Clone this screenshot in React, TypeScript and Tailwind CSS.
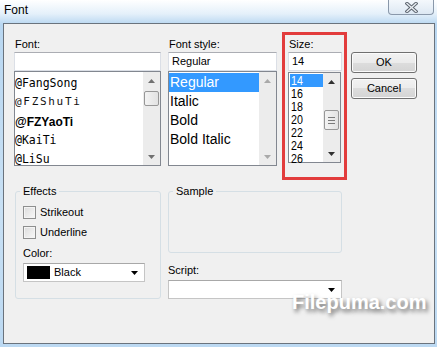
const sans = "font-['Liberation_Sans',Arial,sans-serif]";
const mono = "font-['DejaVu_Sans_Mono','Liberation_Mono',monospace]";

function Arrow({ dir, color }: { dir: "up" | "down"; color: string }) {
  return (
    <svg width="7" height="4" viewBox="0 0 7 4">
      <path d={dir === "up" ? "M0 4L3.5 0L7 4Z" : "M0 0L7 0L3.5 4Z"} fill={color} />
    </svg>
  );
}

function ScrollBar({
  thumbTop,
  thumbH,
  grip,
  arrow,
}: {
  thumbTop?: number;
  thumbH?: number;
  grip?: boolean;
  arrow: string;
}) {
  return (
    <div className="flex h-full w-[17px] flex-col bg-[#ececec]">
      <div className="flex h-[17px] items-center justify-center">
        <Arrow dir="up" color={arrow} />
      </div>
      <div className="flex-1">
        {thumbH ? (
          <div
            className="mx-[1px] flex flex-col items-center justify-center gap-[2px] rounded-[2px] border border-[#979797] bg-[linear-gradient(90deg,#f3f3f3,#e2e2e2)]"
            style={{ marginTop: thumbTop, height: thumbH }}
          >
            {grip && (
              <>
                <div className="h-px w-[7px] bg-[#7a7a7a]" />
                <div className="h-px w-[7px] bg-[#7a7a7a]" />
                <div className="h-px w-[7px] bg-[#7a7a7a]" />
              </>
            )}
          </div>
        ) : null}
      </div>
      <div className="flex h-[17px] items-center justify-center">
        <Arrow dir="down" color={arrow} />
      </div>
    </div>
  );
}

function TextBox({ value, className }: { value: string; className: string }) {
  return (
    <div
      className={`flex h-[19px] items-center border border-[#dbdfe6] border-t-[#abadb3] bg-white pl-[3px] text-[11px] text-black ${className}`}
    >
      {value}
    </div>
  );
}

function Combo({ children }: { children?: React.ReactNode }) {
  return (
    <div className="flex h-[19px] items-center border border-[#c5c5c5] border-t-[#a8a8a8] bg-white text-[11px]">
      <div className="flex flex-1 items-center">{children}</div>
      <div className="mr-[6px] flex items-center">
        <Arrow dir="down" color="#000" />
      </div>
    </div>
  );
}

function CheckBox({ label }: { label: string }) {
  return (
    <div className="flex h-[13px] items-center pl-[7px]">
      <div className="h-[13px] w-[13px] border border-[#8e8f8f] bg-[linear-gradient(135deg,#dcdcdc,#f8f8f8)] shadow-[inset_0_0_0_1px_#f4f4f4]" />
      <span className="ml-[4px] text-[11px] leading-[13px]">{label}</span>
    </div>
  );
}

function Button({ label }: { label: string }) {
  return (
    <div className="flex h-[21px] items-center justify-center rounded-[3px] border border-[#707070] bg-[linear-gradient(#f2f2f2_0%,#ebebeb_50%,#dddddd_50%,#d4d4d4_100%)] text-[11px] shadow-[inset_0_0_0_1px_#fbfbfb]">
      {label}
    </div>
  );
}

export default function App() {
  const fonts = [
    { name: "@FangSong", cls: `${mono} text-[11.5px]` },
    { name: "@FZShuTi", cls: `${mono} text-[11px] tracking-[1.7px] text-[#111]` },
    { name: "@FZYaoTi", cls: `${sans} text-[12px] font-bold` },
    { name: "@KaiTi", cls: `${mono} text-[11.5px]` },
    { name: "@LiSu", cls: `${mono} text-[11.5px]` },
  ];
  const styles = ["Regular", "Italic", "Bold", "Bold Italic"];
  const sizes = ["14", "16", "18", "20", "22", "24", "26"];

  return (
    <div
      className={`relative h-[347px] w-[437px] overflow-hidden bg-[linear-gradient(180deg,#ffffff_0%,#e4f0fa_4%,#b9d7f1_7%,#c8e0f4_60%,#bcd9f2_100%)] text-black ${sans}`}
    >
      {/* title bar */}
      <div className="flex h-[23px] items-start justify-between">
        <div className="pl-[4px] pt-[2px] text-[12px] leading-[16px]">Font</div>
        <div className="mr-[3px] flex h-[15px] w-[46px] items-center justify-center rounded-b-[4px] border border-t-0 border-[#8a98aa] bg-[linear-gradient(#f4f8fc,#dde8f3)]">
          <svg width="13" height="11" viewBox="0 0 13 11">
            <path d="M2 1.5L11 9.5M11 1.5L2 9.5" stroke="#5e6670" strokeWidth="3.4" strokeLinecap="square" />
            <path d="M2 1.5L11 9.5M11 1.5L2 9.5" stroke="#e9eef3" strokeWidth="1.4" strokeLinecap="square" />
          </svg>
        </div>
      </div>

      {/* client area */}
      <div className="ml-[3px] h-[321px] w-[432px] border border-[#6a737d] bg-[#f0f0f0]">
        {/* top row */}
        <div className="flex items-start pl-[10px]">
          {/* font */}
          <div className="mt-[12px] w-[147px]">
            <div className="h-[16px] pl-[1px] text-[11px] leading-[16px]">Font:</div>
            <TextBox value="" className="" />
            <div className="flex h-[95px] border border-[#828790] bg-white">
              <div className="flex-1 overflow-hidden pt-[2px]">
                {fonts.map((f) => (
                  <div key={f.name} className={`flex h-[19px] items-center whitespace-nowrap ${f.cls}`}>
                    {f.name}
                  </div>
                ))}
              </div>
              <ScrollBar thumbTop={2} thumbH={15} arrow="#707070" />
            </div>
          </div>

          {/* font style */}
          <div className="ml-[7px] mt-[12px] w-[109px]">
            <div className="h-[16px] pl-[1px] text-[11px] leading-[16px]">Font style:</div>
            <TextBox value="Regular" className="" />
            <div className="flex h-[95px] border border-[#828790] bg-white">
              <div className="flex-1 pt-[1px]">
                {styles.map((s, i) => (
                  <div
                    key={s}
                    className={`flex h-[19px] items-center pl-[1px] text-[14px] ${
                      i === 0 ? "bg-[#3399ff] text-white" : ""
                    }`}
                  >
                    {s}
                  </div>
                ))}
              </div>
              <ScrollBar arrow="#a9a9a9" />
            </div>
          </div>

          {/* size (highlighted) */}
          <div className="ml-[5px] mt-[8px] h-[148px] w-[65px] border-[3px] border-[#e23c3c] pl-[3px] pt-[1px]">
            <div className="h-[16px] pl-[1px] text-[11px] leading-[16px]">Size:</div>
            <TextBox value="14" className="w-[54px]" />
            <div className="mt-[1px] flex h-[91px] w-[53px] border border-[#828790] bg-white">
              <div className="flex-1 pl-[1px] pt-[1px]">
                {sizes.map((s, i) => (
                  <div
                    key={s}
                    className={`flex h-[13px] items-center overflow-hidden pl-[1px] text-[13px] leading-[13px] ${
                      i === 0 ? "bg-[#3399ff] text-white" : ""
                    }`}
                  >
                    <span className="inline-block origin-left scale-x-[0.82]">{s}</span>
                  </div>
                ))}
              </div>
              <ScrollBar thumbTop={20} thumbH={20} grip arrow="#303030" />
            </div>
          </div>

          {/* buttons */}
          <div className="ml-[4px] mt-[28px] flex w-[66px] flex-col gap-[5px]">
            <Button label="OK" />
            <Button label="Cancel" />
          </div>
        </div>

        {/* bottom row */}
        <div className="flex items-start pl-[11px]">
          <fieldset className="mt-[4px] h-[115px] w-[146px] rounded-[3px] border border-[#d5dfe5]">
            <legend className="ml-[4px] px-[3px] text-[11px] leading-[14px]">Effects</legend>
            <div className="mt-[8px]">
              <CheckBox label="Strikeout" />
            </div>
            <div className="mt-[7px]">
              <CheckBox label="Underline" />
            </div>
            <div className="mt-[7px] h-[14px] pl-[7px] text-[11px] leading-[14px]">Color:</div>
            <div className="ml-[7px] mt-[3px] w-[122px]">
              <Combo>
                <div className="ml-[3px] h-[13px] w-[23px] bg-black" />
                <span className="ml-[4px]">Black</span>
              </Combo>
            </div>
          </fieldset>

          <div className="ml-[7px] w-[174px]">
            <fieldset className="mt-[4px] h-[69px] rounded-[3px] border border-[#d5dfe5]">
              <legend className="ml-[4px] px-[3px] text-[11px] leading-[14px]">Sample</legend>
            </fieldset>
            <div className="mt-[10px] h-[14px] text-[11px] leading-[14px]">Script:</div>
            <div className="mt-[3px]">
              <Combo />
            </div>
          </div>
        </div>
      </div>

      {/* watermark */}
      <div className="absolute left-[292px] top-[290px] text-[20px] font-bold leading-[24px] text-white [text-shadow:2px_3px_4px_rgba(0,0,0,0.55)]">
        Filepuma.com
      </div>
    </div>
  );
}
